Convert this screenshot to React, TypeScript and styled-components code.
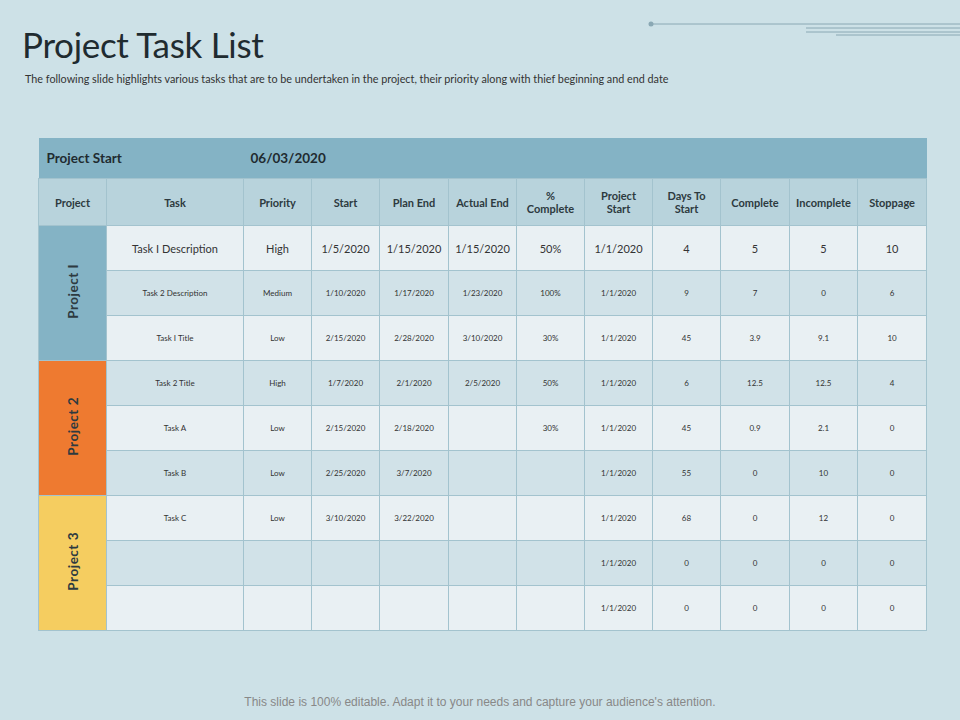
import React from 'react'
import styled, { createGlobalStyle } from 'styled-components'

const Global = createGlobalStyle`
  html, body { margin: 0; padding: 0; }
  body { background: #cde1e7; font-family: Lato, 'Open Sans', sans-serif; color: #2d3a40; }
`

const Page = styled.div`
  width: 960px;
  height: 720px;
  position: relative;
  box-sizing: border-box;
  padding: 24px 34px 0 38px;
  display: flex;
  flex-direction: column;
`

const Title = styled.h1`
  margin: 0 0 0 -16px;
  font-size: 35px;
  font-weight: 400;
  color: #1f2b30;
  letter-spacing: -0.3px;
  line-height: 40px;
`

const Subtitle = styled.p`
  margin: 8px 0 0 -13px;
  font-size: 10.8px;
  color: #333;
`

const Deco = styled.svg`
  position: absolute;
  top: 0;
  right: 0;
`

const Table = styled.table`
  margin-top: 53px;
  border-collapse: collapse;
  table-layout: fixed;
  width: 888px;
`

const TitleCell = styled.td`
  background: #84b3c5;
  height: 40px;
  font-weight: 700;
  font-size: 13.5px;
  color: #1f2b30;
  padding: 0 0 0 8px;
`

const TitleInner = styled.div`
  display: flex;
`

const TitleLabel = styled.span`
  width: 204px;
`

const Head = styled.th`
  background: #b8d3dc;
  height: 46px;
  font-size: 11px;
  font-weight: 700;
  color: #2d3a40;
  border: 1px solid #a3c3ce;
  line-height: 13px;
  padding: 0 2px;
`

const Cell = styled.td<{ $alt: boolean; $big?: boolean }>`
  background: ${p => (p.$alt ? '#d1e2e8' : '#e9f0f3')};
  height: 44px;
  padding: 0;
  text-align: center;
  font-size: ${p => (p.$big ? '11px' : '8px')};
  color: #333;
  border: 1px solid #a3c3ce;
`

const ProjectCell = styled.td<{ $bg: string }>`
  background: ${p => p.$bg};
  border: 1px solid #a3c3ce;
  text-align: center;
  padding: 0;
`

const Vertical = styled.span`
  display: inline-block;
  writing-mode: vertical-rl;
  transform: rotate(180deg);
  font-weight: 700;
  font-size: 13.5px;
  letter-spacing: 0.5px;
  color: #2d3a40;
`

const Footer = styled.div`
  position: absolute;
  bottom: 11px;
  left: 0;
  right: 0;
  text-align: center;
  font-size: 12px;
  color: #888;
  font-family: 'Liberation Sans', Arial, sans-serif;
`

const widths = [68, 137, 68, 68, 69, 68, 68, 68, 68, 69, 68, 69]
const heads = ['Project', 'Task', 'Priority', 'Start', 'Plan End', 'Actual End', '%\nComplete', 'Project\nStart', 'Days To\nStart', 'Complete', 'Incomplete', 'Stoppage']

const rows: string[][] = [
  ['Task I Description', 'High', '1/5/2020', '1/15/2020', '1/15/2020', '50%', '1/1/2020', '4', '5', '5', '10'],
  ['Task 2 Description', 'Medium', '1/10/2020', '1/17/2020', '1/23/2020', '100%', '1/1/2020', '9', '7', '0', '6'],
  ['Task I Title', 'Low', '2/15/2020', '2/28/2020', '3/10/2020', '30%', '1/1/2020', '45', '3.9', '9.1', '10'],
  ['Task 2 Title', 'High', '1/7/2020', '2/1/2020', '2/5/2020', '50%', '1/1/2020', '6', '12.5', '12.5', '4'],
  ['Task A', 'Low', '2/15/2020', '2/18/2020', '', '30%', '1/1/2020', '45', '0.9', '2.1', '0'],
  ['Task B', 'Low', '2/25/2020', '3/7/2020', '', '', '1/1/2020', '55', '0', '10', '0'],
  ['Task C', 'Low', '3/10/2020', '3/22/2020', '', '', '1/1/2020', '68', '0', '12', '0'],
  ['', '', '', '', '', '', '1/1/2020', '0', '0', '0', '0'],
  ['', '', '', '', '', '', '1/1/2020', '0', '0', '0', '0'],
]

const projects = [
  { name: 'Project I', bg: '#84b3c5' },
  { name: 'Project 2', bg: '#ee7a30' },
  { name: 'Project 3', bg: '#f5cd60' },
]

export default function App() {
  return (
    <Page>
      <Global />
      <Deco width="320" height="40" viewBox="0 0 320 40">
        <circle cx="11" cy="24" r="2.5" fill="#8aa8b4" />
        <line x1="11" y1="24" x2="320" y2="24" stroke="#8aa8b4" strokeWidth="1" />
        <line x1="166" y1="28" x2="320" y2="28" stroke="#8aa8b4" strokeWidth="1" />
        <line x1="166" y1="32" x2="320" y2="32" stroke="#8aa8b4" strokeWidth="1" />
        <line x1="196" y1="35" x2="320" y2="35" stroke="#8aa8b4" strokeWidth="1" />
      </Deco>
      <Title>Project Task List</Title>
      <Subtitle>
        The following slide highlights various tasks that are to be undertaken in the project, their priority along with thief beginning and end date
      </Subtitle>
      <Table>
        <colgroup>
          {widths.map((w, i) => <col key={i} style={{ width: w }} />)}
        </colgroup>
        <tbody>
          <tr>
            <TitleCell colSpan={12}>
              <TitleInner>
                <TitleLabel>Project Start</TitleLabel>
                <span>06/03/2020</span>
              </TitleInner>
            </TitleCell>
          </tr>
          <tr>
            {heads.map(h => (
              <Head key={h}>
                {h.split('\n').map((l, i) => <div key={i}>{l}</div>)}
              </Head>
            ))}
          </tr>
          {rows.map((r, i) => (
            <tr key={i}>
              {i % 3 === 0 && (
                <ProjectCell rowSpan={3} $bg={projects[i / 3].bg}>
                  <Vertical>{projects[i / 3].name}</Vertical>
                </ProjectCell>
              )}
              {r.map((c, j) => (
                <Cell key={j} $alt={i % 2 === 1} $big={i === 0}>{c}</Cell>
              ))}
            </tr>
          ))}
        </tbody>
      </Table>
      <Footer>This slide is 100% editable. Adapt it to your needs and capture your audience's attention.</Footer>
    </Page>
  )
}
